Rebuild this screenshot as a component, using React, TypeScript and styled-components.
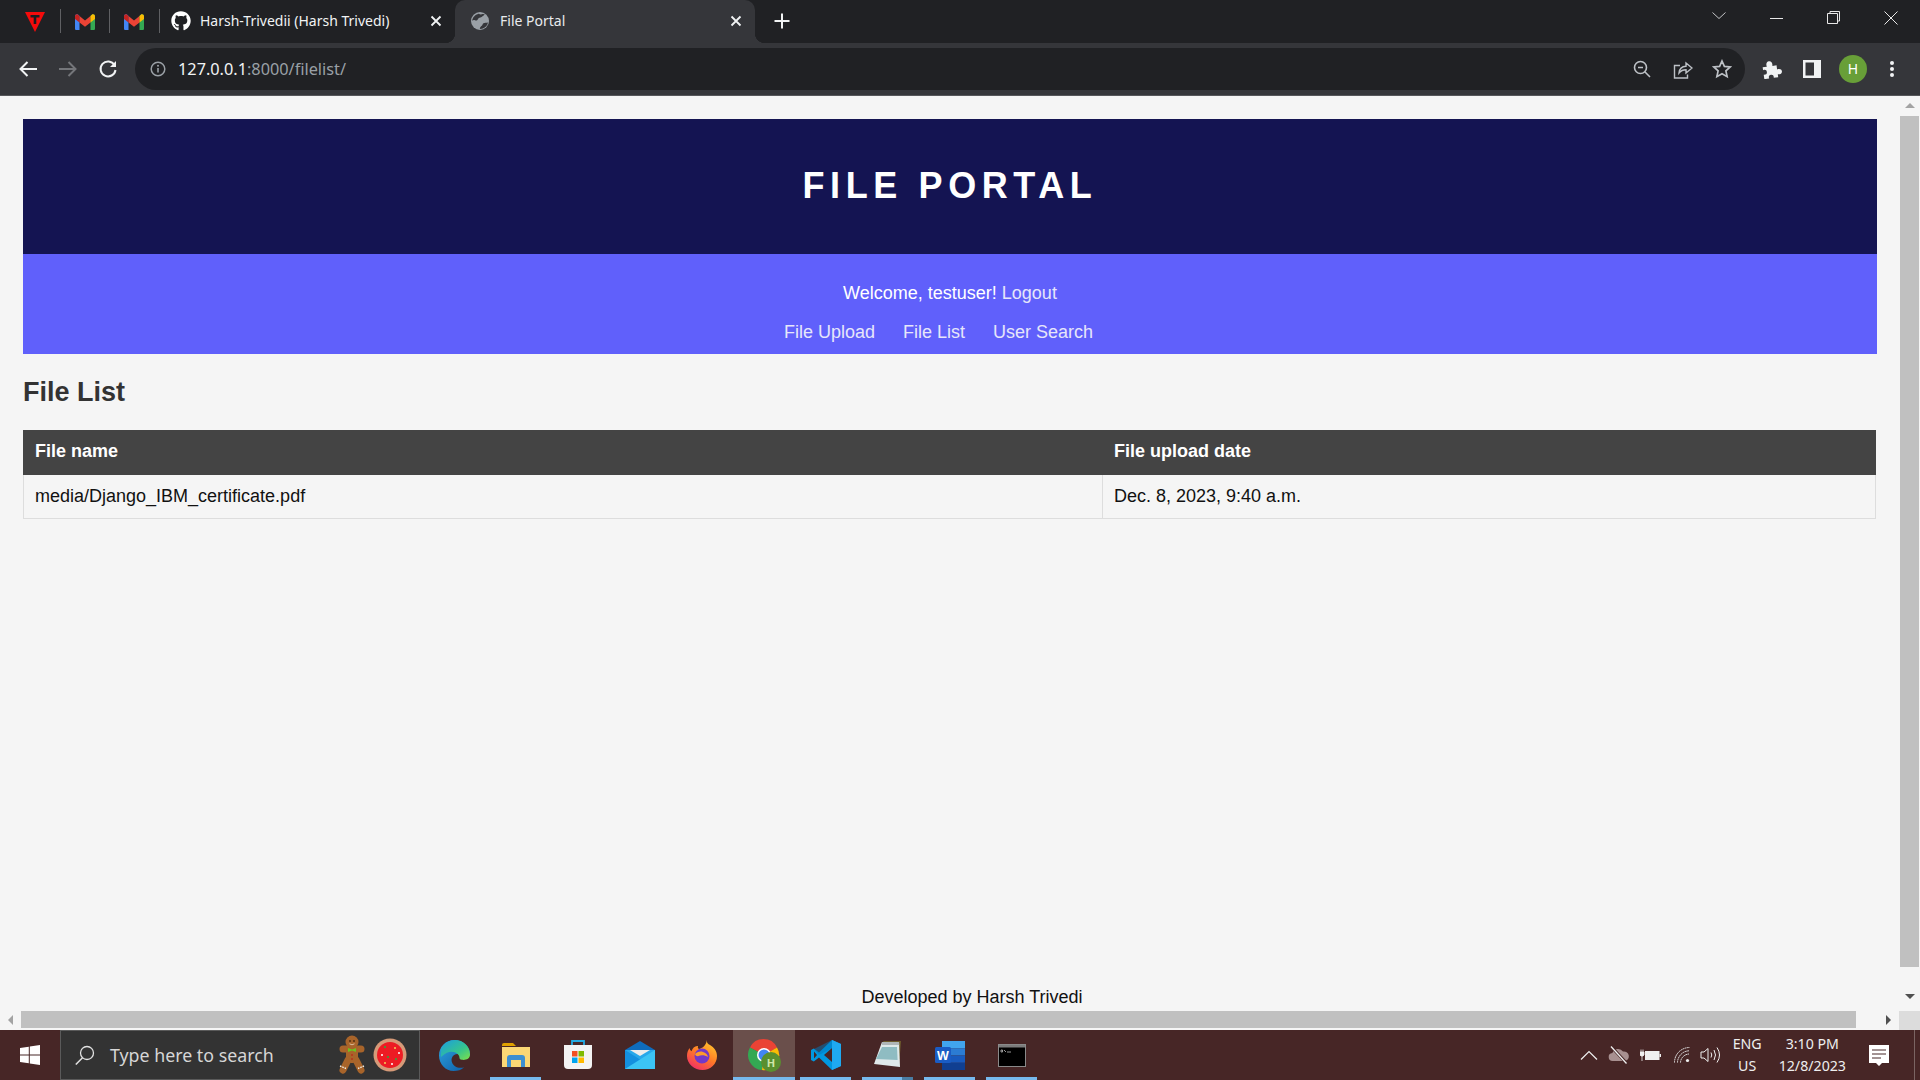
import { ReactNode } from 'react'
import styled, { createGlobalStyle } from 'styled-components'
import { FaGithub } from 'react-icons/fa'

const GlobalStyle = createGlobalStyle`
  html, body {
    margin: 0;
    padding: 0;
    height: 100%;
    overflow: hidden;
    background: #f5f5f5;
  }
  #root {
    height: 100%;
  }
  * {
    box-sizing: border-box;
  }
`

const UI_FONT = `'Noto Sans', 'Open Sans', sans-serif`
const PAGE_FONT = `'Liberation Sans', Arial, sans-serif`

const Screen = styled.div`
  display: flex;
  flex-direction: column;
  width: 1920px;
  height: 1080px;
  overflow: hidden;
`

/* browser chrome */

const TabStrip = styled.div`
  display: flex;
  align-items: stretch;
  height: 43px;
  padding-left: 11px;
  background: #202124;
  flex-shrink: 0;
`

const PinnedTab = styled.div`
  display: flex;
  align-items: center;
  justify-content: center;
  width: 48.5px;
`

const Separator = styled.div`
  width: 1px;
  height: 24px;
  margin-top: 9px;
  background: #5f6063;
`

const Tab = styled.div<{ $active?: boolean }>`
  position: relative;
  display: flex;
  align-items: center;
  gap: ${({ $active }) => ($active ? '11px' : '9px')};
  width: ${({ $active }) => ($active ? '300px' : '295.5px')};
  padding: 0 13px 2px ${({ $active }) => ($active ? '16px' : '11.5px')};
  border-radius: 10px 10px 0 0;
  background: ${({ $active }) => ($active ? '#35363a' : 'transparent')};
  color: ${({ $active }) => ($active ? '#e8eaed' : '#f1f3f4')};
  font: 14px/18px ${UI_FONT};

  ${({ $active }) =>
    $active &&
    `
    &::before, &::after {
      content: '';
      position: absolute;
      bottom: 0;
      width: 10px;
      height: 10px;
    }
    &::before {
      left: -10px;
      background: radial-gradient(circle at 0 0, #202124 10px, #35363a 10.5px);
    }
    &::after {
      right: -10px;
      background: radial-gradient(circle at 100% 0, #202124 10px, #35363a 10.5px);
    }
  `}
`

const TabTitle = styled.span`
  flex: 1;
  white-space: nowrap;
`

const NewTab = styled.div`
  display: flex;
  align-items: center;
  justify-content: center;
  width: 54px;
  padding-bottom: 2px;
`

const WindowControls = styled.div`
  display: flex;
  align-items: flex-start;
  margin-left: auto;
  padding-top: 11px;
  padding-right: 22px;
  gap: 44px;
`

const Toolbar = styled.div`
  display: flex;
  align-items: center;
  height: 53px;
  padding: 0 16px;
  background: #35363a;
  border-bottom: 1px solid #56575a;
  flex-shrink: 0;
`

const NavButtons = styled.div`
  display: flex;
  align-items: center;
  gap: 16px;
  margin-right: 15px;
`

const AddressBar = styled.div`
  display: flex;
  align-items: center;
  width: 1610px;
  height: 42px;
  padding: 0 13px 0 15px;
  border-radius: 21px;
  background: #202124;
  font: 16.3px/20px ${UI_FONT};
  color: #9aa0a6;
`

const Host = styled.span`
  margin-left: 12px;
  color: #f1f3f4;
`

const AddressActions = styled.div`
  display: flex;
  align-items: center;
  gap: 19px;
  margin-left: auto;
`

const ToolbarActions = styled.div`
  display: flex;
  align-items: center;
  gap: 21px;
  margin-left: 17px;
`

const Avatar = styled.div`
  display: flex;
  align-items: center;
  justify-content: center;
  width: 28px;
  height: 28px;
  margin: 0 1px 0 -3px;
  border-radius: 50%;
  background: #689f38;
  color: #fff;
  font: 14px/1 ${UI_FONT};
`

/* the page inside the browser */

const Viewport = styled.div`
  display: flex;
  flex-direction: column;
  height: 934px;
  flex-shrink: 0;
`

const ViewportBody = styled.div`
  display: flex;
  height: 915px;
`

const Page = styled.div`
  display: flex;
  flex-direction: column;
  width: 1899px;
  overflow: hidden;
  background: #f5f5f5;
  font-family: ${PAGE_FONT};
`

const Main = styled.main`
  flex: 1;
  width: 1899px;
  padding: 23px 22px 0 23px;
`

const SiteHeader = styled.header`
  display: flex;
  align-items: center;
  justify-content: center;
  height: 135px;
  padding-bottom: 2px;
  background: #141452;
`

const SiteTitle = styled.h1`
  margin: 0;
  color: #fff;
  font-size: 36px;
  font-weight: 700;
  letter-spacing: 5.6px;
`

const SiteNav = styled.nav`
  display: flex;
  flex-direction: column;
  align-items: center;
  height: 100px;
  padding-top: 29px;
  gap: 18px;
  background: #6060fb;
  font-size: 18px;
  line-height: 21px;
`

const Welcome = styled.div`
  color: #fff;
`

const NavLink = styled.a`
  color: #e6e6fa;
  text-decoration: none;
`

const NavLinks = styled.div`
  display: flex;
  gap: 28px;
  margin-left: -23px;
`

const PageTitle = styled.h2`
  margin: 23px 0 22px;
  color: #333;
  font-size: 27px;
  line-height: 31px;
  font-weight: 700;
`

const FileTable = styled.table`
  width: calc(100% - 1px);
  border-collapse: collapse;
  table-layout: fixed;
  font-size: 18px;
  line-height: 21px;
`

const HeadCell = styled.th`
  height: 44px;
  padding: 0 11px 2px;
  background: #444;
  border: 1px solid #444;
  color: #fff;
  font-weight: 700;
  text-align: left;
`

const Cell = styled.td`
  height: 44px;
  padding: 0 11px;
  border: 1px solid #ddd;
  color: #111;
`

const Footer = styled.footer`
  width: 1944px;
  flex-shrink: 0;
  height: 24px;
  color: #111;
  font-size: 18px;
  line-height: 21px;
  text-align: center;
`

/* scrollbars */

const VerticalBar = styled.div`
  display: flex;
  flex-direction: column;
  align-items: center;
  width: 21px;
  padding-top: 7px;
  background: #f5f5f5;
`

const VerticalThumb = styled.div`
  width: 19px;
  height: 851px;
  margin-top: 8px;
  background: #c0c0c0;
`

const ArrowUp = styled.div<{ $dark?: boolean }>`
  width: 0;
  height: 0;
  border-left: 5px solid transparent;
  border-right: 5px solid transparent;
  border-bottom: 5px solid ${({ $dark }) => ($dark ? '#505050' : '#a3a3a3')};
`

const ArrowDown = styled(ArrowUp)`
  margin-top: 27px;
  border-bottom: 0;
  border-top: 5px solid #505050;
`

const HorizontalBar = styled.div`
  display: flex;
  height: 19px;
  background: #f5f5f5;
`

const HorizontalTrack = styled.div`
  display: flex;
  align-items: flex-start;
  width: 1899px;
`

const ArrowSlot = styled.div<{ $w: number; $pad?: number }>`
  display: flex;
  align-items: center;
  justify-content: center;
  width: ${({ $w }) => $w}px;
  height: 17px;
  padding-left: ${({ $pad }) => $pad ?? 0}px;
`

const ArrowLeft = styled.div`
  width: 0;
  height: 0;
  border-top: 5px solid transparent;
  border-bottom: 5px solid transparent;
  border-right: 5px solid #a3a3a3;
`

const ArrowRight = styled.div`
  width: 0;
  height: 0;
  border-top: 5px solid transparent;
  border-bottom: 5px solid transparent;
  border-left: 5px solid #505050;
`

const HorizontalThumb = styled.div`
  width: 1835px;
  height: 17px;
  background: #c0c0c0;
`

const ScrollCorner = styled.div`
  width: 21px;
  background: #dcdcdc;
`

/* windows taskbar */

const Taskbar = styled.div`
  display: flex;
  align-items: stretch;
  height: 50px;
  flex-shrink: 0;
  background: #472626;
`

const StartButton = styled.div`
  display: flex;
  align-items: center;
  justify-content: center;
  width: 60px;
`

const SearchBox = styled.div`
  display: flex;
  align-items: center;
  gap: 4px;
  width: 360px;
  padding: 0 12px 0 14px;
  background: #333;
  border: 1px solid #5a5a5a;
  color: #d6d6d6;
  font: 17.8px/22px ${UI_FONT};
`

const SearchLabel = styled.span`
  margin-left: 11px;
  margin-right: auto;
  white-space: nowrap;
`

const TaskButtons = styled.div`
  display: flex;
  margin-left: 3px;
`

const TaskButton = styled.div<{ $active?: boolean; $open?: boolean; $double?: boolean }>`
  position: relative;
  display: flex;
  align-items: center;
  justify-content: center;
  width: 62px;
  background: ${({ $active }) => ($active ? '#6a4f4b' : 'transparent')};

  ${({ $open, $active, $double }) =>
    ($open || $active) &&
    `
    &::after {
      content: '';
      position: absolute;
      bottom: 0;
      left: ${$active ? '0' : '5px'};
      right: ${$active ? '0' : '6px'};
      height: 3px;
      background: ${
        $double
          ? 'linear-gradient(to right, #76b9ed 0 40px, #4a7da3 40px)'
          : '#76b9ed'
      };
    }
  `}
`

const Tray = styled.div`
  display: flex;
  align-items: center;
  margin-left: auto;
  color: #eee;
  font: 14.2px/22px ${UI_FONT};
`

const TrayIcons = styled.div`
  display: flex;
  align-items: center;
  gap: 10px;
  margin-right: 12px;
`

const TrayText = styled.div`
  display: flex;
  flex-direction: column;
  align-items: center;
  white-space: nowrap;
`

const ClockText = styled(TrayText)`
  margin-left: 17px;
  margin-right: 23px;
`

const TrayEnd = styled.div`
  display: flex;
  align-items: center;
  height: 100%;
`

const NotificationSlot = styled.div`
  display: flex;
  align-items: center;
  padding-right: 25px;
`

const ShowDesktop = styled.div`
  width: 6px;
  height: 100%;
  border-left: 1px solid #7a6462;
`

function Svg({ size, h, box, children }: { size: number; h?: number; box: string; children: ReactNode }) {
  return (
    <svg width={size} height={h ?? size} viewBox={box} style={{ flexShrink: 0 }}>
      {children}
    </svg>
  )
}

const TabLogo = () => (
  <Svg size={22} box="0 0 22 22">
    <path d="M1 1h20L11 21z" fill="#f40b0b" />
    <path d="M6.500 4h9v2.600h-3.200V13H9.700V6.600H6.500z" fill="#1b1c1f" />
  </Svg>
)

const GmailIcon = () => (
  <Svg size={20} h={16} box="0 0 20 16">
    <path d="M0 2.200C0 .4 2 -.4 3.200.7L4.500 2v14H1.300C.6 16 0 15.400 0 14.700z" fill="#4285f4" />
    <path d="M20 2.200c0-1.800-2-2.600-3.200-1.500L15.500 2v14h3.200c.7 0 1.300-.6 1.300-1.300z" fill="#34a853" />
    <path d="M4.500 8.500V2L10 6.400 15.500 2v6.500L10 12.800z" fill="#ea4335" />
    <path d="M0 2.200v2.700l4.500 3.600V2L3.200.7C2-.4 0 .4 0 2.200z" fill="#c5221f" />
    <path d="M20 2.200v2.700l-4.500 3.600V2l1.300-1.300C18-.4 20 .4 20 2.200z" fill="#fbbc04" />
  </Svg>
)

const GlobeIcon = () => (
  <Svg size={18} box="0 0 18 18">
    <circle cx="9" cy="9" r="9" fill="#9aa0a6" />
    <path d="M7.500 1.500c1.500 1 2.500 1.200 4 .6.800-.3 1.700-.2 2.300.5-1 .8-1.800 1.700-3.200 2.400-1.500.8-3 .7-3.700 2.200-.6 1.300-1.700 1.500-3 1-1-.4-1.800-.2-2.700.5.300-3.300 2.800-6.200 6.300-6.800z" fill="#35363a" />
    <path d="M17 10.500c-.5 2.800-2.500 5-5.200 6-1 .3-2.200.5-3 .3.200-1.300 1-2.200 2-3 .8-.6.700-1.800 1.700-2.500 1.200-.8 2.900-.4 4.500-.8z" fill="#35363a" />
  </Svg>
)

const CloseX = () => (
  <Svg size={12} box="0 0 12 12">
    <path d="M1.500 1.500l9 9M10.500 1.500l-9 9" stroke="#f1f3f4" strokeWidth="1.800" />
  </Svg>
)

const PlusIcon = () => (
  <Svg size={16} box="0 0 16 16">
    <path d="M8 .5v15M.5 8h15" stroke="#f1f3f4" strokeWidth="2" />
  </Svg>
)

const ChevronCaption = () => (
  <Svg size={14} h={9} box="0 0 14 9">
    <path d="M.5 1.500L7 7.500l6.500-6" fill="none" stroke="#c4c5c7" strokeWidth="1" />
  </Svg>
)

const MinIcon = () => (
  <Svg size={13} box="0 0 13 13">
    <path d="M0 7.500h13" stroke="#e8e8e8" strokeWidth="1" />
  </Svg>
)

const RestoreIcon = () => (
  <Svg size={13} box="0 0 13 13">
    <path d="M3 2.500V.5h9.500V10h-2M.5 2.500h10v10H.5z" fill="none" stroke="#e8e8e8" strokeWidth="1" />
  </Svg>
)

const CloseWindowIcon = () => (
  <Svg size={14} box="0 0 14 14">
    <path d="M.5.5l13 13M13.500.5l-13 13" stroke="#e8e8e8" strokeWidth="1" />
  </Svg>
)

const BackIcon = ({ color }: { color: string }) => (
  <Svg size={24} box="0 0 24 24">
    <path d="M21 12H5M11.500 5L4.500 12l7 7" fill="none" stroke={color} strokeWidth="2" />
  </Svg>
)

const ForwardIcon = () => (
  <Svg size={24} box="0 0 24 24">
    <path d="M3 12h16M12.500 5l7 7-7 7" fill="none" stroke="#74767a" strokeWidth="2" />
  </Svg>
)

const ReloadIcon = () => (
  <Svg size={24} box="0 0 24 24">
    <path d="M18.500 8A7.500 7.500 0 1 0 19.500 13" fill="none" stroke="#f1f3f4" strokeWidth="2" />
    <path d="M20 4v6h-6z" fill="#f1f3f4" />
  </Svg>
)

const InfoIcon = () => (
  <Svg size={16} box="0 0 16 16">
    <circle cx="8" cy="8" r="6.800" fill="none" stroke="#9aa0a6" strokeWidth="1.500" />
    <path d="M8 7v4.500" stroke="#9aa0a6" strokeWidth="1.600" />
    <circle cx="8" cy="4.800" r="1" fill="#9aa0a6" />
  </Svg>
)

const ZoomOutIcon = () => (
  <Svg size={21} h={18} box="0 0 21 18">
    <circle cx="7.500" cy="7.500" r="6" fill="none" stroke="#bdc1c6" strokeWidth="1.600" />
    <path d="M5 7.500h5M11.800 11.800L17 17" stroke="#bdc1c6" strokeWidth="1.600" />
  </Svg>
)

const ShareIcon = () => (
  <Svg size={20} box="0 0 20 20">
    <path d="M7 6.500H1.500v12.500h13V15.500" fill="none" stroke="#bdc1c6" strokeWidth="1.400" />
    <path d="M6 14c.4-4 3-6.500 7-6.700V4l6 5-6 5v-3.200c-3 0-5.200 1-7 3.200z" fill="none" stroke="#bdc1c6" strokeWidth="1.400" />
  </Svg>
)

const StarIcon = () => (
  <Svg size={20} box="0 0 20 20">
    <path d="M10 2l2.400 5.400 5.800.6-4.300 3.900 1.200 5.800L10 14.800l-5.100 2.900 1.200-5.800L1.800 8l5.800-.6z" fill="none" stroke="#bdc1c6" strokeWidth="1.700" />
  </Svg>
)

const PuzzleIcon = () => (
  <Svg size={20} box="0 0 20 20">
    <path d="M1 7h4.200c-.8-3 .6-5 2.800-5s3.600 2 2.800 5H15v4.200c2.800-.6 4.500.6 4.500 2.500s-1.700 3-4.500 2.400V19h-4.500c.6-2.400-.6-3.500-2.300-3.500s-2.900 1.100-2.300 3.500H1v-4.500c2.400.5 3.500-.6 3.500-2.300S3.400 9.300 1 9.900z" fill="#f1f3f4" transform="rotate(-8 10 10)" />
  </Svg>
)

const SidePanelIcon = () => (
  <Svg size={18} box="0 0 18 18">
    <path d="M0 0h18v18H0z" fill="#f1f3f4" />
    <path d="M2.500 2.500h8.500v13H2.500z" fill="#35363a" />
  </Svg>
)

const DotsIcon = () => (
  <Svg size={6} h={18} box="0 0 6 18">
    <circle cx="3" cy="3" r="2" fill="#f1f3f4" />
    <circle cx="3" cy="9" r="2" fill="#f1f3f4" />
    <circle cx="3" cy="15" r="2" fill="#f1f3f4" />
  </Svg>
)

const WindowsLogo = () => (
  <Svg size={20} box="0 0 20 20">
    <path d="M0 3l8.800-1.300v7.800H0zM9.800 1.500L20 0v9.500H9.800zM0 10.500h8.800v7.800L0 17zM9.800 10.500H20V20l-10.200-1.500z" fill="#fff" />
  </Svg>
)

const SearchGlass = () => (
  <Svg size={20} box="0 0 20 20">
    <circle cx="12" cy="8" r="6.500" fill="none" stroke="#e2e2e2" strokeWidth="1.300" />
    <path d="M7.500 12.800L.8 19.500" stroke="#e2e2e2" strokeWidth="1.500" />
  </Svg>
)

const Gingerbread = () => (
  <Svg size={34} h={40} box="0 0 34 40">
    <path d="M8 14l18 0M13 25l-5 10M21 25l5 10" stroke="#a8642a" strokeWidth="7" strokeLinecap="round" />
    <rect x="11" y="10" width="12" height="18" rx="5" fill="#a8642a" />
    <circle cx="17" cy="7" r="6.500" fill="#a8642a" />
    <circle cx="15" cy="6" r=".9" fill="#4a2a10" />
    <circle cx="19" cy="6" r=".9" fill="#4a2a10" />
    <path d="M14.500 8.800q2.500 2 5 0" stroke="#f1e3cc" fill="none" strokeWidth=".7" />
    <path d="M13 13l4 1.500 4-1.500v4l-4-1.500-4 1.500z" fill="#6fc021" />
    <circle cx="17" cy="20" r="1" fill="#b7321c" />
    <circle cx="17" cy="24" r="1" fill="#b7321c" />
    <path d="M5 31l6 2.500M23 33.500l6-2.500" stroke="#f4efe6" strokeWidth="1.400" strokeDasharray="1.500 1" />
  </Svg>
)

const Cookie = () => (
  <Svg size={34} box="0 0 34 34">
    <circle cx="17" cy="17" r="16.500" fill="#d69a78" />
    <circle cx="17" cy="17" r="13" fill="#ed1c24" />
    <circle cx="12" cy="9" r="1.100" fill="#32a838" />
    <circle cx="22" cy="10" r="1" fill="#f2d15a" />
    <circle cx="26" cy="15" r="1" fill="#fff" />
    <circle cx="9" cy="17" r="1" fill="#fff" />
    <circle cx="15" cy="19" r="1.100" fill="#32a838" />
    <circle cx="23" cy="21" r="1.100" fill="#32a838" />
    <circle cx="12" cy="25" r="1" fill="#f2d15a" />
    <circle cx="19" cy="26" r="1" fill="#fff" />
  </Svg>
)

const EdgeIcon = () => (
  <Svg size={31} box="0 0 32 32">
    <defs>
      <linearGradient id="edgeA" x1="0" y1="0" x2="1" y2="1">
        <stop offset="0" stopColor="#2fa6e0" />
        <stop offset="1" stopColor="#0c59a4" />
      </linearGradient>
      <linearGradient id="edgeB" x1="0" y1="0" x2="1" y2="1">
        <stop offset="0" stopColor="#1b9de2" />
        <stop offset="0.6" stopColor="#36c58c" />
        <stop offset="1" stopColor="#7fe04a" />
      </linearGradient>
    </defs>
    <path d="M16 0C7 0 0 7 0 16c0 9 7 16 15 16 4.500 0 8-1.400 11-4-3 1-7 .8-9.500-1-2.800-1.900-4.500-5.500-3-9 1-2.600 3.800-4 6.500-3.500 2 .3 2.500 1.600 2 2.500 3 1 12 .5 10-5C30.500 5.500 24 0 16 0z" fill="url(#edgeA)" />
    <path d="M2 9c3-6 9-9 14.500-9C25 0 32 6.500 32 15c0 5-5 6-8.500 5.400-3-.5-2-2.500-3-4.400-1.500-3-6-4.500-10-3.500-3.300.8-6 3-8.500 5-.3-3 .3-5.500 0-8.500z" fill="url(#edgeB)" />
  </Svg>
)

const FolderIcon = () => (
  <Svg size={28} h={24} box="0 0 28 24">
    <path d="M0 2a2 2 0 0 1 2-2h9l3 3H0z" fill="#e0a100" />
    <path d="M0 4h28v20H0z" fill="#fbd775" />
    <path d="M5 24v-9a3 3 0 0 1 3-3h12a3 3 0 0 1 3 3v9h-4v-7H9v7z" fill="#3d8fd1" />
    <path d="M9 17h10v7H9z" fill="#fbd775" />
  </Svg>
)

const StoreIcon = () => (
  <Svg size={30} h={30} box="0 0 30 30">
    <path d="M9 6V1h12v5" fill="none" stroke="#23a9e1" strokeWidth="1.800" />
    <path d="M1 5h28v20a4 4 0 0 1-4 4H5a4 4 0 0 1-4-4z" fill="#f3f3f3" />
    <path d="M9 11h5.500v5.500H9z" fill="#f25022" />
    <path d="M15.500 11H21v5.500h-5.500z" fill="#7fba00" />
    <path d="M9 17.500h5.500V23H9z" fill="#00a4ef" />
    <path d="M15.500 17.500H21V23h-5.500z" fill="#ffb900" />
  </Svg>
)

const MailIcon = () => (
  <Svg size={30} h={28} box="0 0 30 28">
    <path d="M15 0l15 9H0z" fill="#0f6cbd" />
    <path d="M0 9h30v19H0z" fill="#28a8ea" />
    <path d="M0 9v19h30z" fill="#1490df" />
    <path d="M30 9v19H0z" fill="#3cc4f5" />
    <path d="M5 9h20L15 15z" fill="#ececec" />
  </Svg>
)

const FirefoxIcon = () => (
  <Svg size={30} box="0 0 30 30">
    <defs>
      <linearGradient id="foxA" x1="0.800" y1="0" x2="0.200" y2="1">
        <stop offset="0" stopColor="#ffcb2e" />
        <stop offset="0.500" stopColor="#ff7a26" />
        <stop offset="1" stopColor="#f02a6a" />
      </linearGradient>
    </defs>
    <path d="M20 0c-.5 3 1 4 3 5 4 2.200 7 6 7 11 0 8-6.500 14-14.500 14S0 24 0 16c0-3 .8-5.500 2.500-8 .3 1.500.8 2.500 2 3.200C5.500 8 8 5.500 11 6c-.5 1.500 0 2.500 1 3 3-.8 7-3 8-9z" fill="url(#foxA)" />
    <circle cx="15" cy="16" r="7.500" fill="#7238c8" />
    <path d="M8 14c2-2 5-3 8-2 2.500.7 4.500 2.500 5 5-3-2-7-2.500-9.500-1-1 .6-3 0-3.500-2z" fill="#ff9a2b" />
  </Svg>
)

const ChromeIcon = () => (
  <Svg size={32} box="0 0 32 32">
    <path d="M16 16L2 8.500A15 15 0 0 1 29 8.500z" fill="#ea4335" />
    <path d="M16 16L2 8.500A15 15 0 0 0 14 31z" fill="#34a853" />
    <path d="M16 16l13-7.500A15 15 0 0 1 14 31z" fill="#fbbc04" />
    <circle cx="16" cy="16" r="7" fill="#fff" />
    <circle cx="16" cy="16" r="5.500" fill="#4285f4" />
  </Svg>
)

const ChromeBadge = styled.div`
  position: absolute;
  left: 28px;
  top: 22px;
  display: flex;
  align-items: center;
  justify-content: center;
  width: 20px;
  height: 20px;
  border-radius: 50%;
  background: #5a8f2f;
  color: #cfe6a8;
  font: 700 11px/1 ${UI_FONT};
`

const VsCodeIcon = () => (
  <Svg size={30} box="0 0 30 30">
    <path d="M21 0l9 4v22l-9 4L8 17.500 2.800 21.500 0 20V10l2.800-1.500L8 12.500z" fill="#0098e0" />
    <path d="M21 0l9 4v22l-9 4z" fill="#1fa9f0" />
    <path d="M21 8l-8 7 8 7z" fill="#472626" />
    <path d="M3 11.500L6 15l-3 3.500z" fill="#472626" />
    <path d="M21 0v8l-13 7 -5-6z" fill="#0078c0" opacity=".5" />
  </Svg>
)

const NotepadIcon = () => (
  <Svg size={28} h={28} box="0 0 28 28">
    <path d="M9 0h18l-2 26z" fill="#6d5a2c" />
    <path d="M8 1h17l1 25-26-3z" fill="#dfe9ea" />
    <path d="M8 6h15l.6 13L2 18z" fill="#8fbcc2" />
    <path d="M8 1h17l.3 3H8z" fill="#b0b6b8" />
  </Svg>
)

const WordIcon = () => (
  <Svg size={30} h={29} box="0 0 30 29">
    <path d="M7 0h23v7.200H7z" fill="#41a5ee" />
    <path d="M7 7.200h23v7.300H7z" fill="#2b7cd3" />
    <path d="M7 14.500h23v7.300H7z" fill="#185abd" />
    <path d="M7 21.800h23V29H7z" fill="#103f91" />
    <rect x="0" y="6" width="16" height="16" rx="1.500" fill="#1a5cc4" />
    <text x="8" y="18.500" textAnchor="middle" fill="#fff" fontSize="12.500" fontWeight="700" fontFamily="'Liberation Sans', sans-serif">W</text>
  </Svg>
)

const CmdIcon = () => (
  <Svg size={28} h={23} box="0 0 28 23">
    <rect x="0.500" y="0.500" width="27" height="22" fill="#000" stroke="#8a8a8a" />
    <path d="M1 1h26v2.500H1z" fill="#9a9a9a" opacity=".8" />
    <path d="M3 6h1.500v2H3zM6 6l2 2M9 8h4" stroke="#bbb" strokeWidth=".8" fill="none" />
  </Svg>
)

const TrayChevron = () => (
  <Svg size={18} h={10} box="0 0 18 10">
    <path d="M1 9.500l8-8 8 8" fill="none" stroke="#f0f0f0" strokeWidth="1.200" />
  </Svg>
)

const OneDriveOff = () => (
  <Svg size={22} h={18} box="0 0 22 18">
    <path d="M5 15a4 4 0 0 1-.6-8A6 6 0 0 1 15 5.500 4.800 4.800 0 0 1 17 15z" fill="#a89090" />
    <path d="M3.500 1L18 16.500" stroke="#472626" strokeWidth="3" />
    <path d="M3 .5l15.500 17" stroke="#f0f0f0" strokeWidth="1.300" />
  </Svg>
)

const BatteryIcon = () => (
  <Svg size={21} h={14} box="0 0 21 14">
    <path d="M5 3h14.500v9H5z" fill="#f0f0f0" />
    <path d="M19.500 6h1.500v3h-1.500z" fill="#f0f0f0" />
    <path d="M0 4h4v3l-1 1h-2l-1-1zM1 1.500v2.500M3 1.500v2.500M2 8v5" stroke="#f0f0f0" fill="#f0f0f0" strokeWidth=".8" />
  </Svg>
)

const WifiIcon = () => (
  <Svg size={19} h={16} box="-3 0 19 16">
    <path d="M.5 15.500A15 15 0 0 1 15.500.5M3.500 15.500A12 12 0 0 1 15 3.800M6.500 15.500A9 9 0 0 1 15 7" fill="none" stroke="#e6e6e6" strokeWidth="1" strokeDasharray="1.800 .5" />
    <circle cx="13.500" cy="13.500" r="1.600" fill="#f0f0f0" />
  </Svg>
)

const VolumeIcon = () => (
  <Svg size={21} h={18} box="0 0 21 18">
    <path d="M1 6h3l4-3.500v13L4 12H1z" fill="none" stroke="#f0f0f0" strokeWidth="1" />
    <path d="M11 6.500q1.500 2.500 0 5M14 4q3 5 0 10M17 1.500q5 7.500 0 15" fill="none" stroke="#f0f0f0" strokeWidth="1" />
  </Svg>
)

const NotificationIcon = () => (
  <Svg size={20} h={21} box="0 0 20 21">
    <path d="M0 0h20v18h-7l-3 3-3-3H0z" fill="#fff" />
    <path d="M3 5h14M3 9h14M3 13h9" stroke="#472626" strokeWidth="1" />
  </Svg>
)

export default function App() {
  return (
    <Screen>
      <GlobalStyle />

      <TabStrip>
        <PinnedTab>
          <TabLogo />
        </PinnedTab>
        <Separator />
        <PinnedTab>
          <GmailIcon />
        </PinnedTab>
        <Separator />
        <PinnedTab>
          <GmailIcon />
        </PinnedTab>
        <Separator />
        <Tab>
          <FaGithub size={20} color="#fff" />
          <TabTitle>Harsh-Trivedii (Harsh Trivedi)</TabTitle>
          <CloseX />
        </Tab>
        <Tab $active>
          <GlobeIcon />
          <TabTitle>File Portal</TabTitle>
          <CloseX />
        </Tab>
        <NewTab>
          <PlusIcon />
        </NewTab>
        <WindowControls>
          <ChevronCaption />
          <MinIcon />
          <RestoreIcon />
          <CloseWindowIcon />
        </WindowControls>
      </TabStrip>

      <Toolbar>
        <NavButtons>
          <BackIcon color="#f1f3f4" />
          <ForwardIcon />
          <ReloadIcon />
        </NavButtons>
        <AddressBar>
          <InfoIcon />
          <Host>127.0.0.1</Host>:8000/filelist/
          <AddressActions>
            <ZoomOutIcon />
            <ShareIcon />
            <StarIcon />
          </AddressActions>
        </AddressBar>
        <ToolbarActions>
          <PuzzleIcon />
          <SidePanelIcon />
          <Avatar>H</Avatar>
          <DotsIcon />
        </ToolbarActions>
      </Toolbar>

      <Viewport>
        <ViewportBody>
          <Page>
            <Main>
              <SiteHeader>
                <SiteTitle>FILE PORTAL</SiteTitle>
              </SiteHeader>
              <SiteNav>
                <Welcome>
                  Welcome, testuser! <NavLink href="#">Logout</NavLink>
                </Welcome>
                <NavLinks>
                  <NavLink href="#">File Upload</NavLink>
                  <NavLink href="#">File List</NavLink>
                  <NavLink href="#">User Search</NavLink>
                </NavLinks>
              </SiteNav>
              <PageTitle>File List</PageTitle>
              <FileTable>
                <colgroup>
                  <col style={{ width: '1079px' }} />
                  <col />
                </colgroup>
                <thead>
                  <tr>
                    <HeadCell>File name</HeadCell>
                    <HeadCell>File upload date</HeadCell>
                  </tr>
                </thead>
                <tbody>
                  <tr>
                    <Cell>media/Django_IBM_certificate.pdf</Cell>
                    <Cell>Dec. 8, 2023, 9:40 a.m.</Cell>
                  </tr>
                </tbody>
              </FileTable>
            </Main>
            <Footer>Developed by Harsh Trivedi</Footer>
          </Page>
          <VerticalBar>
            <ArrowUp />
            <VerticalThumb />
            <ArrowDown $dark />
          </VerticalBar>
        </ViewportBody>
        <HorizontalBar>
          <HorizontalTrack>
            <ArrowSlot $w={21}>
              <ArrowLeft />
            </ArrowSlot>
            <HorizontalThumb />
            <ArrowSlot $w={43} $pad={22}>
              <ArrowRight />
            </ArrowSlot>
          </HorizontalTrack>
          <ScrollCorner />
        </HorizontalBar>
      </Viewport>

      <Taskbar>
        <StartButton>
          <WindowsLogo />
        </StartButton>
        <SearchBox>
          <SearchGlass />
          <SearchLabel>Type here to search</SearchLabel>
          <Gingerbread />
          <Cookie />
        </SearchBox>
        <TaskButtons>
          <TaskButton>
            <EdgeIcon />
          </TaskButton>
          <TaskButton $open>
            <FolderIcon />
          </TaskButton>
          <TaskButton>
            <StoreIcon />
          </TaskButton>
          <TaskButton>
            <MailIcon />
          </TaskButton>
          <TaskButton>
            <FirefoxIcon />
          </TaskButton>
          <TaskButton $active>
            <ChromeIcon />
            <ChromeBadge>H</ChromeBadge>
          </TaskButton>
          <TaskButton $open>
            <VsCodeIcon />
          </TaskButton>
          <TaskButton $open $double>
            <NotepadIcon />
          </TaskButton>
          <TaskButton $open>
            <WordIcon />
          </TaskButton>
          <TaskButton $open>
            <CmdIcon />
          </TaskButton>
        </TaskButtons>
        <Tray>
          <TrayIcons>
            <TrayChevron />
            <OneDriveOff />
            <BatteryIcon />
            <WifiIcon />
            <VolumeIcon />
          </TrayIcons>
          <TrayText>
            <span>ENG</span>
            <span>US</span>
          </TrayText>
          <ClockText>
            <span>3:10 PM</span>
            <span>12/8/2023</span>
          </ClockText>
          <TrayEnd>
            <NotificationSlot>
              <NotificationIcon />
            </NotificationSlot>
            <ShowDesktop />
          </TrayEnd>
        </Tray>
      </Taskbar>
    </Screen>
  )
}
